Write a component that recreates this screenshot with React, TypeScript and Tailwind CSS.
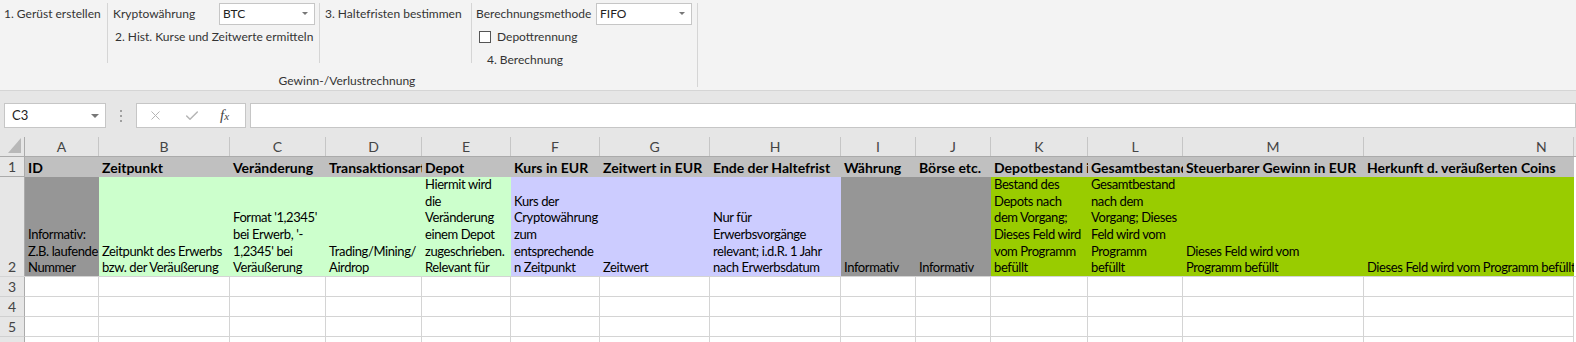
import { X, Check } from 'lucide-react';

type Col = { key: string; w: string; h1: string; bg2: string; lines: string[] };

const cols: Col[] = [
  { key: 'A', w: 'w-[74px]', h1: 'ID', bg2: 'bg-[#969696]', lines: ['Informativ:', 'Z.B. laufende', 'Nummer'] },
  { key: 'B', w: 'w-[131px]', h1: 'Zeitpunkt', bg2: 'bg-[#ccffcc]', lines: ['Zeitpunkt des Erwerbs', 'bzw. der Veräußerung'] },
  { key: 'C', w: 'w-[96px]', h1: 'Veränderung', bg2: 'bg-[#ccffcc]', lines: ["Format '1,2345'", "bei Erwerb, '-", "1,2345' bei", 'Veräußerung'] },
  { key: 'D', w: 'w-[96px]', h1: 'Transaktionsart', bg2: 'bg-[#ccffcc]', lines: ['Trading/Mining/', 'Airdrop'] },
  {
    key: 'E',
    w: 'w-[89px]',
    h1: 'Depot',
    bg2: 'bg-[#ccffcc]',
    lines: ['Hiermit wird', 'die', 'Veränderung', 'einem Depot', 'zugeschrieben.', 'Relevant für'],
  },
  { key: 'F', w: 'w-[89px]', h1: 'Kurs in EUR', bg2: 'bg-[#ccccff]', lines: ['Kurs der', 'Cryptowährung', 'zum', 'entsprechende', 'n Zeitpunkt'] },
  { key: 'G', w: 'w-[110px]', h1: 'Zeitwert in EUR', bg2: 'bg-[#ccccff]', lines: ['Zeitwert'] },
  {
    key: 'H',
    w: 'w-[131px]',
    h1: 'Ende der Haltefrist',
    bg2: 'bg-[#ccccff]',
    lines: ['Nur für', 'Erwerbsvorgänge', 'relevant; i.d.R. 1 Jahr', 'nach Erwerbsdatum'],
  },
  { key: 'I', w: 'w-[75px]', h1: 'Währung', bg2: 'bg-[#969696]', lines: ['Informativ'] },
  { key: 'J', w: 'w-[75px]', h1: 'Börse etc.', bg2: 'bg-[#969696]', lines: ['Informativ'] },
  {
    key: 'K',
    w: 'w-[97px]',
    h1: 'Depotbestand in Coins',
    bg2: 'bg-[#99cc00]',
    lines: ['Bestand des', 'Depots nach', 'dem Vorgang;', 'Dieses Feld wird', 'vom Programm', 'befüllt'],
  },
  {
    key: 'L',
    w: 'w-[95px]',
    h1: 'Gesamtbestand',
    bg2: 'bg-[#99cc00]',
    lines: ['Gesamtbestand', 'nach dem', 'Vorgang; Dieses', 'Feld wird vom', 'Programm', 'befüllt'],
  },
  { key: 'M', w: 'w-[181px]', h1: 'Steuerbarer Gewinn in EUR', bg2: 'bg-[#99cc00]', lines: ['Dieses Feld wird vom', 'Programm befüllt'] },
  {
    key: 'N',
    w: 'w-[210px]',
    h1: 'Herkunft d. veräußerten Coins',
    bg2: 'bg-[#99cc00]',
    lines: ['Dieses Feld wird vom Programm befüllt'],
  },
];

const cell = "font-['Lato',sans-serif] text-[14px]";

function Combo({ value, w }: { value: string; w: string }) {
  return (
    <div className={`${w} h-[22px] bg-white border border-[#c6c6c6] flex items-center justify-between pl-[3px] pr-[6px]`}>
      <span className="text-[12px] text-[#222]">{value}</span>
      <span className="w-0 h-0 border-l-[3px] border-r-[3px] border-t-[3px] border-l-transparent border-r-transparent border-t-[#777]" />
    </div>
  );
}

function Sep({ h }: { h: string }) {
  return <div className={`w-px ${h} bg-[#d5d5d5] mt-[3px]`} />;
}

function Ribbon() {
  return (
    <div className="h-[91px] bg-[#f3f3f3] border-b border-[#d5d5d5] font-['Lato',sans-serif] text-[12px] text-[#333] whitespace-nowrap">
      <div className="w-[698px] flex flex-col">
        <div className="flex h-[71px]">
          <div className="w-[107px] pl-[4px] pt-[2px]">
            <div className="h-[23px] flex items-center">1. Gerüst erstellen</div>
          </div>
          <Sep h="h-[60px]" />
          <div className="w-[211px] pt-[2px]">
            <div className="h-[23px] flex items-center pl-[5px]">
              <span className="w-[106px]">Kryptowährung</span>
              <Combo value="BTC" w="w-[96px]" />
            </div>
            <div className="h-[23px] flex items-center pl-[7px]">2. Hist. Kurse und Zeitwerte ermitteln</div>
          </div>
          <Sep h="h-[60px]" />
          <div className="w-[151px] pt-[2px] pl-[5px]">
            <div className="h-[23px] flex items-center">3. Haltefristen bestimmen</div>
          </div>
          <Sep h="h-[60px]" />
          <div className="w-[225px] pt-[2px]">
            <div className="h-[23px] flex items-center pl-[4px]">
              <span className="w-[120px]">Berechnungsmethode</span>
              <Combo value="FIFO" w="w-[96px]" />
            </div>
            <div className="h-[23px] flex items-center pl-[7px] gap-[6px]">
              <span className="w-[12px] h-[12px] border border-[#555] bg-white" />
              <span>Depottrennung</span>
            </div>
            <div className="h-[23px] flex items-center pl-[15px]">4. Berechnung</div>
          </div>
          <Sep h="h-[84px]" />
        </div>
        <div className="h-[19px] flex items-center justify-center pr-[4px]">Gewinn-/Verlustrechnung</div>
      </div>
    </div>
  );
}

function FormulaBar() {
  return (
    <div className="h-[46px] bg-[#e6e6e6] pt-[12px] flex items-start">
      <div className="ml-[4px] w-[102px] h-[25px] bg-white border border-[#c6c6c6] flex items-center justify-between pl-[7px] pr-[6px]">
        <span className="font-['Lato',sans-serif] text-[13px] text-[#222]">C3</span>
        <span className="w-0 h-0 border-l-[4px] border-r-[4px] border-t-[4px] border-l-transparent border-r-transparent border-t-[#777]" />
      </div>
      <div className="w-[30px] h-[25px] flex flex-col items-center justify-center gap-[3px]">
        <span className="w-[2px] h-[2px] bg-[#a0a0a0]" />
        <span className="w-[2px] h-[2px] bg-[#a0a0a0]" />
        <span className="w-[2px] h-[2px] bg-[#a0a0a0]" />
      </div>
      <div className="w-[110px] h-[25px] bg-white border border-[#c6c6c6] flex items-center">
        <X className="w-[15px] h-[15px] text-[#b5b5b5] ml-[11px]" strokeWidth={1.6} />
        <Check className="w-[16px] h-[16px] text-[#b5b5b5] ml-[21px]" strokeWidth={2.2} />
        <span className="ml-[20px] font-['Liberation_Serif',serif] italic text-[15px] text-[#444] leading-none">
          f<span className="text-[11px]">x</span>
        </span>
      </div>
      <div className="ml-[4px] flex-1 h-[25px] bg-white border border-[#c6c6c6]" />
    </div>
  );
}

function Grid() {
  return (
    <div className={`${cell} bg-white`}>
      {/* column letters */}
      <div className="flex h-[20px] bg-[#e6e6e6] border-b border-[#ababab] text-[#444]">
        <div className="w-[25px] border-r border-[#ababab] flex items-end justify-end">
          <svg width="14" height="16" viewBox="0 0 14 16" className="mr-[2px] mb-[2px]">
            <polygon points="13,0 13,15 0,15" fill="#b8b8b8" />
          </svg>
        </div>
        {cols.map((c) => (
          <div
            key={c.key}
            className={`${c.w} border-r border-[#c6c6c6] flex items-center ${c.key === 'N' ? 'justify-start pl-[172px]' : 'justify-center'}`}
          >
            {c.key}
          </div>
        ))}
      </div>
      {/* row 1 */}
      <div className="flex h-[20px]">
        <div className="w-[25px] bg-[#e6e6e6] border-r border-b border-[#ababab] text-[#444] flex items-center justify-center">1</div>
        {cols.map((c) => (
          <div
            key={c.key}
            className={`${c.w} bg-[#c0c0c0] font-bold text-black whitespace-nowrap overflow-hidden pl-[3px] flex items-center`}
          >
            {c.h1}
          </div>
        ))}
      </div>
      {/* row 2 */}
      <div className="flex h-[100px] border-b border-[#d4d4d4]">
        <div className="w-[25px] bg-[#e6e6e6] border-r border-[#ababab] text-[#444] flex items-end justify-center leading-[17px] pb-[1px]">
          2
        </div>
        {cols.map((c) => (
          <div
            key={c.key}
            className={`${c.w} ${c.bg2} text-black text-[13px] tracking-[-0.4px] whitespace-nowrap overflow-hidden pl-[3px] flex flex-col justify-end leading-[16.67px]`}
          >
            {c.lines.map((l, i) => (
              <div key={i}>{l}</div>
            ))}
          </div>
        ))}
      </div>
      {[3, 4, 5, 6].map((r) => (
        <div key={r} className="flex h-[20px]">
          <div className="w-[25px] bg-[#e6e6e6] border-r border-b border-r-[#ababab] border-b-[#d0d0d0] text-[#444] flex items-center justify-center">
            {r}
          </div>
          {cols.map((c) => (
            <div key={c.key} className={`${c.w} border-r border-b border-[#d4d4d4]`} />
          ))}
        </div>
      ))}
    </div>
  );
}

export default function App() {
  return (
    <div className="w-[1576px] h-[342px] overflow-hidden bg-[#e6e6e6]">
      <Ribbon />
      <FormulaBar />
      <Grid />
    </div>
  );
}
